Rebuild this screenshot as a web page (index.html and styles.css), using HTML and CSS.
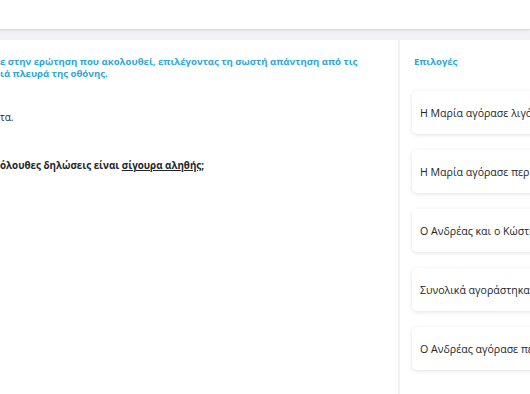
FILE: index.html
```html
<!DOCTYPE html>
<html lang="el">
<head>
    <meta charset="UTF-8">
    <meta name="viewport" content="width=device-width, initial-scale=1.0">
    <title>Ερώτηση</title>
    <link rel="stylesheet" href="styles.css">
</head>
<body>
    <header class="topbar"></header>

    <main class="layout">
        <section class="question-panel">
            <p class="instructions">
                <span class="line">ε στην ερώτηση που ακολουθεί, επιλέγοντας τη σωστή απάντηση από τις</span>
                <span class="line">ιά πλευρά της οθόνης.</span>
            </p>
            <p class="passage">τα.</p>
            <p class="question">όλουθες δηλώσεις είναι <u>σίγουρα αληθής</u>;</p>
        </section>

        <aside class="options-panel">
            <h2 class="options-title">Επιλογές</h2>
            <ul class="options">
                <li class="option">Η Μαρία αγόρασε λιγότερα μήλα από τον Ανδρέα.</li>
                <li class="option">Η Μαρία αγόρασε περισσότερα μήλα από τον Κώστα.</li>
                <li class="option">Ο Ανδρέας και ο Κώστας αγόρασαν τον ίδιο αριθμό μήλων.</li>
                <li class="option">Συνολικά αγοράστηκαν περισσότερα από είκοσι μήλα.</li>
                <li class="option">Ο Ανδρέας αγόρασε περισσότερα μήλα από όλους.</li>
            </ul>
        </aside>
    </main>
</body>
</html>
```

FILE: styles.css
```css
:root {
    --accent: #2fa6d3;
    --page-bg: #f1f2f4;
    --panel-bg: #ffffff;
    --text: #222629;
}

* {
    margin: 0;
    padding: 0;
    box-sizing: border-box;
}

html, body {
    height: 100%;
    overflow: hidden;
}

body {
    font-family: "Open Sans", "Noto Sans", sans-serif;
    background: var(--page-bg);
    color: var(--text);
    font-size: 10px;
}

.topbar {
    height: 30px;
    background: #ffffff;
    border-bottom: 1px solid #d9dadc;
    box-shadow: 0 1px 3px rgba(0,0,0,0.06);
}

.layout {
    display: grid;
    grid-template-columns: 398px 260px;
    gap: 2px;
    padding-top: 10px;
    height: calc(100% - 30px);
}

.question-panel {
    background: var(--panel-bg);
    padding-top: 16px;
}

.instructions {
    color: var(--accent);
    font-weight: 700;
    font-size: 9.6px;
    line-height: 12px;
}

.line {
    display: block;
    white-space: nowrap;
}

.passage {
    margin-top: 31px;
    line-height: 12px;
}

.question {
    margin-top: 37px;
    font-weight: 700;
    font-size: 9.8px;
    line-height: 12px;
}

.question u {
    text-underline-offset: 1px;
}

.options-panel {
    background: var(--panel-bg);
    padding: 16px 0 0 12px;
}

.options-title {
    color: var(--accent);
    font-size: 9.5px;
    font-weight: 700;
    line-height: 12px;
    padding-left: 2px;
}

.options {
    list-style: none;
    display: flex;
    flex-direction: column;
    gap: 16px;
    margin-top: 23px;
}

.option {
    height: 43px;
    display: flex;
    align-items: center;
    padding-left: 8px;
    font-size: 10.6px;
    background: #ffffff;
    border-radius: 5px;
    box-shadow: 0 1px 4px rgba(0,0,0,0.12);
    white-space: nowrap;
    overflow: hidden;
}
```
